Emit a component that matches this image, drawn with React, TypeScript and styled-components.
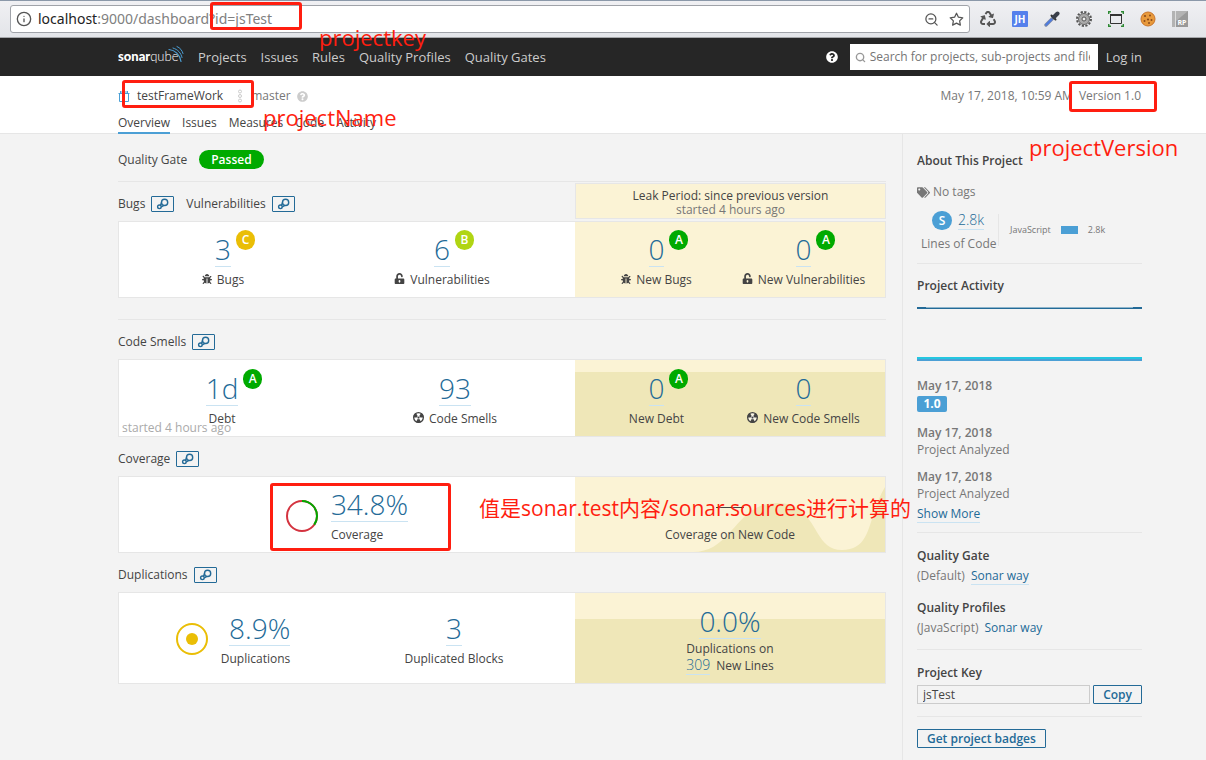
import React from "react";
import styled, { createGlobalStyle } from "styled-components";
import { FaBug, FaUnlockAlt, FaTags, FaQuestionCircle, FaRecycle } from "react-icons/fa";
import { FiSearch, FiStar, FiZoomOut, FiInfo } from "react-icons/fi";

const blue = "#236a97";
const lightBlue = "#4b9fd5";
const line = "#e6e6e6";
const red = "#ff1e10";

const Global = createGlobalStyle`
  * { box-sizing: border-box; }
  html { background: #f3f3f3; }
  body {
    margin: 0;
    background: #f3f3f3;
    color: #444;
    font: 12px/16px "Open Sans", "Noto Sans CJK SC", sans-serif;
  }
  a { color: inherit; text-decoration: none; }
  button, input { font: inherit; }
  h1, h2, h3, p, ul { margin: 0; padding: 0; font: inherit; list-style: none; }
`;

const Page = styled.div`
  position: relative;
  min-height: 100vh;
  overflow: hidden;
  display: flex;
  flex-direction: column;
`;

/* Browser toolbar */
const Toolbar = styled.div`
  display: flex;
  align-items: center;
  height: 38px;
  padding: 0 18px 0 10px;
  border-top: 1px solid #8b98a9;
  border-bottom: 1px solid #a5a7aa;
  background: linear-gradient(#f0f0f3, #e3e5e9);
`;
const AddressBar = styled.div`
  flex: 1;
  display: flex;
  align-items: center;
  gap: 6px;
  height: 28px;
  padding: 0 5px;
  border: 1px solid #a0a3a9;
  border-radius: 3px;
  background: #fff;
  color: #555;
`;
const Address = styled.div`
  flex: 1;
  outline: 0;
  font-family: "Noto Sans", "Open Sans", sans-serif;
  font-size: 14px;
  line-height: 20px;
  color: #808080;
  b { font-weight: 400; color: #222; }
`;
const PlainButton = styled.button`
  display: flex;
  align-items: center;
  justify-content: center;
  min-width: 16px;
  height: 16px;
  padding: 0;
  border: 0;
  background: none;
  color: inherit;
`;
const BarActions = styled.div`
  display: flex;
  gap: 9px;
`;
const Extensions = styled.div`
  display: flex;
  gap: 16px;
  margin-left: 10px;
  color: #555;
`;

/* Site navigation */
const NavBar = styled.header`
  display: flex;
  align-items: center;
  height: 38px;
  padding: 0 64px 0 118px;
  background: #262626;
  color: #ccc;
  font-size: 13px;
`;
const NavLinks = styled.nav`
  flex: 1;
  display: flex;
  gap: 14px;
  margin-left: 14px;
`;
const SearchBox = styled.label`
  display: flex;
  align-items: center;
  gap: 4px;
  width: 248px;
  height: 26px;
  margin: 0 8px 0 10px;
  padding: 0 8px 0 5px;
  background: #fff;
  color: #999;
  font-size: 12px;
  input {
    flex: 1;
    min-width: 0;
    padding: 0;
    border: 0;
    outline: 0;
    background: none;
  }
  input::placeholder { color: #757575; }
`;

/* Project header */
const ProjectHeader = styled.div`
  height: 58px;
  padding: 11px 65px 0 118px;
  border-bottom: 1px solid ${line};
  background: #fff;
`;
const ProjectRow = styled.div`
  display: flex;
  align-items: center;
  height: 18px;
  color: #777;
`;
const ProjectName = styled.h1`
  margin: 0 14px 0 7px;
  color: #444;
`;
const Branch = styled.span`
  display: flex;
  align-items: center;
  gap: 6px;
  margin-left: 8px;
  svg { color: #ccc; }
`;
const Meta = styled.div`
  display: flex;
  gap: 6px;
  margin-left: auto;
`;
const Tabs = styled.nav`
  display: flex;
  gap: 12px;
  margin-top: 9px;
  line-height: 18px;
`;
const Tab = styled.a<{ $active?: boolean }>`
  height: 20px;
  border-bottom: 2px solid ${(p) => (p.$active ? lightBlue : "transparent")};
`;

/* Page columns */
const Columns = styled.div`
  flex: 1;
  display: grid;
  grid-template-columns: minmax(0, 1fr) 240px;
  column-gap: 16px;
  padding: 0 64px 0 118px;
`;
const Side = styled.aside`
  padding-left: 14px;
  border-left: 1px solid ${line};
  color: #777;
`;

const Gate = styled.div`
  display: flex;
  align-items: center;
  gap: 12px;
  height: 48px;
  padding-top: 4px;
  border-bottom: 1px solid ${line};
`;
const Passed = styled.span`
  padding: 0 12px;
  border-radius: 10px;
  background: #0a0;
  color: #fff;
  font-weight: 600;
  line-height: 19px;
`;
const Heading = styled.div`
  display: flex;
  justify-content: space-between;
  height: 39px;
`;
const Titles = styled.div`
  display: flex;
  align-items: center;
  padding-top: 5px;
`;
const Title = styled.h2`
  margin-right: 6px;
`;
const LinkButton = styled.button`
  width: 23px;
  height: 16px;
  margin-right: 12px;
  padding: 0;
  border: 1px solid ${blue};
  border-radius: 1px;
  background: none;
  color: ${blue};
  svg { display: block; }
`;
const LeakBox = styled.div`
  width: 311px;
  height: 36px;
  margin-top: 1px;
  padding-top: 5px;
  border: 1px solid ${line};
  background: #fbf3d5;
  line-height: 14px;
  text-align: center;
  p + p { color: #777; }
`;
const Card = styled.section<{ $height?: number }>`
  position: relative;
  display: grid;
  grid-template-columns: minmax(0, 1fr) 310px;
  height: ${(p) => p.$height || 77}px;
  border: 1px solid ${line};
  background: #fff;
`;
const Divider = styled.hr`
  width: 100%;
  height: 1px;
  margin: 21px 0 0;
  border: 0;
  background: ${line};
`;
const Pane = styled.div<{ $cols: string; $right?: number; $gap?: number }>`
  display: grid;
  grid-template-columns: ${(p) => p.$cols};
  column-gap: ${(p) => p.$gap || 0}px;
  align-items: center;
  padding: 2px ${(p) => p.$right || 0}px 0 0;
`;
const LeakPane = styled.div<{ $single?: boolean; $fill?: number }>`
  position: relative;
  display: grid;
  grid-template-columns: ${(p) => (p.$single ? "1fr" : "1fr 1fr")};
  align-items: center;
  padding: 2px 8px 0;
  background: ${(p) =>
    p.$fill === undefined
      ? "#fbf3d5"
      : `linear-gradient(#fbf3d5 ${p.$fill}px, #efe7b8 ${p.$fill}px)`};
`;
const Wave = styled.svg`
  position: absolute;
  inset: 0;
  width: 100%;
  height: 100%;
`;
const Cell = styled.div`
  position: relative;
  display: flex;
  align-items: center;
  justify-content: center;
  gap: 13px;
`;
const Stack = styled.div<{ $align?: string }>`
  display: flex;
  flex-direction: column;
  align-items: ${(p) => p.$align || "center"};
`;
const Value = styled.a`
  position: relative;
  border-bottom: 1px solid #cae3f2;
  color: ${blue};
  font-size: 28px;
  font-weight: 300;
  line-height: 33px;
`;
const Rating = styled.span<{ $color: string }>`
  position: absolute;
  left: 100%;
  top: -3px;
  width: 19px;
  height: 20px;
  margin-left: 5px;
  border-radius: 10px;
  background: ${(p) => p.$color};
  color: #fff;
  font-size: 12px;
  font-weight: 600;
  line-height: 20px;
  text-align: center;
`;
const Label = styled.span`
  display: flex;
  align-items: center;
  gap: 5px;
  margin-top: 5px;
  white-space: nowrap;
  svg { margin-top: -3px; }
`;
const NoValue = styled.span`
  width: 28px;
  height: 1px;
  margin: 19px 0 14px;
  background: #444;
`;
const TwoLines = styled.div`
  margin-top: 2px;
  a {
    margin-right: 6px;
    border-bottom: 1px solid #cae3f2;
    color: ${blue};
    font-size: 14px;
    font-weight: 300;
  }
`;
const Started = styled.span`
  position: absolute;
  left: 3px;
  bottom: 0;
  color: #aaa;
`;

/* Sidebar parts */
const SideBlock = styled.section<{ $top: number; $bottom: number; $last?: boolean }>`
  padding: ${(p) => p.$top}px 0 ${(p) => p.$bottom}px;
  border-bottom: ${(p) => (p.$last ? "0" : `1px solid ${line}`)};
`;
const SideTitle = styled.h3`
  color: #444;
  font-weight: 600;
`;
const Tags = styled.p`
  display: flex;
  align-items: center;
  gap: 3px;
  margin-top: 15px;
`;
const Size = styled.div`
  display: flex;
  align-items: center;
  margin-top: 11px;
`;
const SizeMain = styled.div`
  width: 81px;
  padding-left: 4px;
  white-space: nowrap;
`;
const SizeValue = styled.div`
  display: flex;
  align-items: center;
  gap: 6px;
  margin-bottom: 6px;
  padding-left: 11px;
  a {
    border-bottom: 1px solid #cae3f2;
    color: ${blue};
    font-size: 14px;
    font-weight: 300;
    line-height: 18px;
  }
`;
const SizeBadge = styled.span`
  width: 20px;
  border-radius: 10px;
  background: ${lightBlue};
  color: #fff;
  font-weight: 600;
  line-height: 19px;
  text-align: center;
`;
const Languages = styled.div`
  display: flex;
  align-items: center;
  gap: 10px;
  height: 32px;
  margin-bottom: 4px;
  padding-left: 11px;
  border-left: 1px solid ${line};
  font-size: 9px;
  i { width: 17px; height: 8px; background: ${lightBlue}; }
`;
const Graph = styled.svg`
  display: block;
  width: 100%;
  height: 54px;
  margin: 13px 0 16px;
`;
const Event = styled.li`
  margin-bottom: 10px;
  line-height: 17px;
  strong { display: block; font-weight: 600; }
  &:last-child { margin-bottom: 4px; }
`;
const VersionTag = styled.span`
  display: block;
  width: 30px;
  margin: 2px 0 12px;
  border-radius: 2px;
  background: ${lightBlue};
  color: #fff;
  font-weight: 700;
  line-height: 16px;
  text-align: center;
`;
const BlueLink = styled.a<{ $plain?: boolean }>`
  border-bottom: ${(p) => (p.$plain ? "0" : "1px solid #cae3f2")};
  color: ${blue};
`;
const Assigned = styled.p<{ $gap?: boolean }>`
  display: flex;
  gap: 6px;
  margin: 4px 0 ${(p) => (p.$gap ? 15 : 0)}px;
`;
const KeyRow = styled.div`
  display: flex;
  gap: 3px;
  margin-top: 4px;
  input {
    flex: 1;
    min-width: 0;
    height: 19px;
    padding: 0 5px;
    border: 1px solid #ccc;
    background: none;
    color: #444;
  }
`;
const Outline = styled.button`
  height: 19px;
  padding: 0 9px;
  border: 1px solid ${blue};
  border-radius: 1px;
  background: none;
  color: ${blue};
  font-weight: 600;
  line-height: 16px;
`;

/* Notes drawn over the page */
const Frame = styled.div<{ $x: number; $y: number; $w: number; $h: number }>`
  position: absolute;
  left: ${(p) => p.$x}px;
  top: ${(p) => p.$y}px;
  width: ${(p) => p.$w}px;
  height: ${(p) => p.$h}px;
  border: 3px solid ${red};
  border-radius: 3px;
  pointer-events: none;
`;
const Note = styled.span<{ $x: number; $y: number; $size?: number }>`
  position: absolute;
  left: ${(p) => p.$x}px;
  top: ${(p) => p.$y}px;
  color: ${red};
  font-size: ${(p) => p.$size || 22}px;
  line-height: 28px;
  white-space: nowrap;
  pointer-events: none;
`;

const Chain = ({ label }: { label: string }) => (
  <LinkButton aria-label={label}>
    <svg width="21" height="14" viewBox="0 0 21 14" fill="none" stroke="currentColor" strokeWidth="1.4">
      <circle cx="12.6" cy="5.4" r="3.1" />
      <circle cx="7.4" cy="9.8" r="1.8" />
      <path d="M9.500 5.500L8.600 8.200M9.300 10l2.500-1.500" />
    </svg>
  </LinkButton>
);

const SmellIcon = () => (
  <svg width="11" height="11" viewBox="0 0 12 12">
    <circle cx="6" cy="6" r="5.300" fill="#fff" fillOpacity=".6" stroke="#444" strokeWidth="1.400" />
    <path fill="#444" d="M6 6L3.200 1.200A5.600 5.600 0 0 0 .4 6ZM6 6h5.600A5.600 5.600 0 0 0 8.800 1.200ZM6 6L3.200 10.800a5.600 5.600 0 0 0 5.600 0Z" />
    <circle cx="6" cy="6" r="1.400" fill="#444" stroke="#fff" strokeWidth=".7" />
  </svg>
);

const Logo = () => (
  <svg width="66" height="22" viewBox="0 0 66 22" role="img" aria-label="sonarqube">
    <text x="0" y="16" fill="#fff" fontFamily="Lato, sans-serif" fontSize="13">
      <tspan fontWeight="900">sonar</tspan>
      <tspan fontWeight="300">qube</tspan>
    </text>
    <g fill="none" stroke={lightBlue} strokeLinecap="round">
      <path d="M51 4.500c6 .5 11 5 12 12" strokeWidth="1.200" />
      <path d="M55 3c5 1.500 8 5 9 9.500" />
      <path d="M59 1.500c3.500 1.500 5 4 6 7" />
    </g>
  </svg>
);

const A = <Rating $color="#0a0">A</Rating>;

export default function App() {
  return (
    <>
      <Global />
      <Page>
        <Toolbar>
          <AddressBar>
            <FiInfo size={16} />
            <Address role="textbox" aria-label="Address" contentEditable suppressContentEditableWarning spellCheck={false}>
              <b>localhost</b>:9000/dashboard?id=jsTest
            </Address>
            <BarActions>
              <PlainButton aria-label="Zoom out"><FiZoomOut size={15} /></PlainButton>
              <PlainButton aria-label="Bookmark"><FiStar size={15} /></PlainButton>
            </BarActions>
          </AddressBar>
          <Extensions>
            <PlainButton aria-label="Recycle"><FaRecycle size={16} /></PlainButton>
            <PlainButton aria-label="JH">
              <svg width="16" height="16" viewBox="0 0 16 16">
                <rect width="16" height="16" rx="1" fill="#5580ec" />
                <text x="8" y="12" fill="#fff" fontFamily="Open Sans, sans-serif" fontSize="10" fontWeight="700" textAnchor="middle">JH</text>
              </svg>
            </PlainButton>
            <PlainButton aria-label="Color picker">
              <svg width="16" height="16" viewBox="0 0 16 16" strokeLinecap="round">
                <path d="M2 14L9 7" stroke="#7d8aa5" strokeWidth="3.400" />
                <path d="M2.200 13.800L7.500 8.500" stroke="#4d7be0" strokeWidth="2" />
                <path d="M7.500 4.500l4 4" stroke="#333" strokeWidth="2" />
                <path d="M10 6l3.500-3.500" stroke="#3a3f4a" strokeWidth="4" />
              </svg>
            </PlainButton>
            <PlainButton aria-label="Settings">
              <svg width="16" height="16" viewBox="0 0 16 16" fill="none">
                <circle cx="8" cy="8" r="7" stroke="#555" strokeWidth="2" strokeDasharray="2.200 1.470" />
                <circle cx="8" cy="8" r="5.500" fill="#aaa" stroke="#666" />
                <circle cx="8" cy="8" r="2" fill="#eee" stroke="#555" />
              </svg>
            </PlainButton>
            <PlainButton aria-label="Resize window">
              <svg width="16" height="16" viewBox="0 0 16 16" fill="none">
                <path d="M.7 3V.7H3M13 .7h2.300V3M15.300 13v2.300H13M3 15.300H.7V13" stroke="#2f8a35" strokeWidth="1.400" />
                <path d="M2.500 3.500h11v9h-11z" stroke="#333" />
                <path d="M2 4h12" stroke="#333" strokeWidth="2" />
              </svg>
            </PlainButton>
            <PlainButton aria-label="Cookies">
              <svg width="16" height="16" viewBox="0 0 16 16">
                <circle cx="8" cy="8" r="7" fill="#e89a3c" stroke="#c9742a" />
                <g fill="#8a4a1c">
                  <circle cx="5" cy="5" r="1.100" /><circle cx="10" cy="4.500" r="1" /><circle cx="8" cy="8.500" r="1.100" />
                  <circle cx="4.500" cy="10" r="1" /><circle cx="11.500" cy="9" r="1" /><circle cx="9" cy="12" r="1" />
                </g>
              </svg>
            </PlainButton>
            <PlainButton aria-label="RP">
              <svg width="16" height="16" viewBox="0 0 16 16">
                <rect width="16" height="16" fill="#b3b3b3" />
                <path d="M3 0h1v16H3z" fill="#ddd" />
                <path d="M4 10L16 0v16H4z" fill="#999" />
                <text x="10" y="14" fill="#fff" fontFamily="Open Sans, sans-serif" fontSize="7" fontWeight="700" textAnchor="middle">RP</text>
              </svg>
            </PlainButton>
          </Extensions>
        </Toolbar>

        <NavBar>
          <a href="#home"><Logo /></a>
          <NavLinks>
            <a href="#projects">Projects</a>
            <a href="#issues">Issues</a>
            <a href="#rules">Rules</a>
            <a href="#profiles">Quality Profiles</a>
            <a href="#gates">Quality Gates</a>
          </NavLinks>
          <PlainButton aria-label="Help"><FaQuestionCircle size={12} color="#fff" /></PlainButton>
          <SearchBox>
            <FiSearch size={11} strokeWidth={3} />
            <input type="text" aria-label="Search" placeholder="Search for projects, sub-projects and files..." />
          </SearchBox>
          <a href="#login">Log in</a>
        </NavBar>

        <ProjectHeader>
          <ProjectRow>
            <svg width="12" height="12" viewBox="0 0 12 12" fill="none" stroke={lightBlue}>
              <path d="M.5 3.500h11M1.500 3.500v8h9v-8M2.500 1v2.500M9.500 1v2.500M4 1v2M8 1v2" />
            </svg>
            <ProjectName>testFrameWork</ProjectName>
            <svg width="6" height="14" viewBox="0 0 6 14" fill="none" stroke="#ccc">
              <circle cx="3" cy="2.500" r="1.500" /><circle cx="3" cy="7" r="1.500" /><circle cx="3" cy="11.500" r="1.500" />
            </svg>
            <Branch>master <FaQuestionCircle size={11} /></Branch>
            <Meta><span>May 17, 2018, 10:59 AM</span><span>Version 1.0</span></Meta>
          </ProjectRow>
          <Tabs>
            <Tab href="#overview" $active>Overview</Tab>
            <Tab href="#project-issues">Issues</Tab>
            <Tab href="#measures">Measures</Tab>
            <Tab href="#code">Code</Tab>
            <Tab href="#activity">Activity</Tab>
          </Tabs>
        </ProjectHeader>

        <Columns>
          <main>
            <Gate>Quality Gate <Passed>Passed</Passed></Gate>

            <Heading>
              <Titles>
                <Title>Bugs</Title><Chain label="Bugs history" />
                <Title>Vulnerabilities</Title><Chain label="Vulnerabilities history" />
              </Titles>
              <LeakBox><p>Leak Period: since previous version</p><p>started 4 hours ago</p></LeakBox>
            </Heading>
            <Card>
              <Pane $cols="208fr 230fr" $right={18}>
                <Stack>
                  <Value href="#bugs">3<Rating $color="#eabe06">C</Rating></Value>
                  <Label><FaBug size={10} />Bugs</Label>
                </Stack>
                <Stack>
                  <Value href="#vulnerabilities">6<Rating $color="#b0d513">B</Rating></Value>
                  <Label><FaUnlockAlt size={11} />Vulnerabilities</Label>
                </Stack>
              </Pane>
              <LeakPane>
                <Stack>
                  <Value href="#new-bugs">0{A}</Value>
                  <Label><FaBug size={10} />New Bugs</Label>
                </Stack>
                <Stack>
                  <Value href="#new-vulnerabilities">0{A}</Value>
                  <Label><FaUnlockAlt size={11} />New Vulnerabilities</Label>
                </Stack>
              </LeakPane>
            </Card>

            <Divider />
            <Heading>
              <Titles><Title>Code Smells</Title><Chain label="Code Smells history" /></Titles>
            </Heading>
            <Card $height={78}>
              <Pane $cols="206fr 240fr" $gap={10}>
                <Stack>
                  <Value href="#debt">1d{A}</Value>
                  <Label>Debt</Label>
                </Stack>
                <Stack>
                  <Value href="#smells">93</Value>
                  <Label><SmellIcon />Code Smells</Label>
                </Stack>
              </Pane>
              <LeakPane $fill={12}>
                <Stack>
                  <Value href="#new-debt">0{A}</Value>
                  <Label>New Debt</Label>
                </Stack>
                <Stack>
                  <Value href="#new-smells">0</Value>
                  <Label><SmellIcon />New Code Smells</Label>
                </Stack>
              </LeakPane>
              <Started>started 4 hours ago</Started>
            </Card>

            <Heading>
              <Titles><Title>Coverage</Title><Chain label="Coverage history" /></Titles>
            </Heading>
            <Card>
              <Pane $cols="1fr">
                <Cell>
                  <svg width="32" height="32" viewBox="0 0 32 32" fill="none" strokeWidth="2">
                    <circle cx="16" cy="16" r="15" stroke="#d4333f" />
                    <circle cx="16" cy="16" r="15" stroke="#0a0" pathLength="100" strokeDasharray="34.8 65.2" transform="rotate(-90 16 16)" />
                  </svg>
                  <Stack $align="flex-start">
                    <Value href="#coverage">34.8%</Value>
                    <Label>Coverage</Label>
                  </Stack>
                </Cell>
              </Pane>
              <LeakPane $single>
                <Wave viewBox="0 0 310 75" preserveAspectRatio="none">
                  <path d="M118 75C158 75 160 26 202 26S236 73 267 73S292 40 310 10V75Z" fill="#efe7b8" />
                </Wave>
                <Cell>
                  <Stack><NoValue /><Label>Coverage on New Code</Label></Stack>
                </Cell>
              </LeakPane>
            </Card>

            <Heading>
              <Titles><Title>Duplications</Title><Chain label="Duplications history" /></Titles>
            </Heading>
            <Card $height={92}>
              <Pane $cols="228fr 214fr" $right={14}>
                <Cell>
                  <svg width="32" height="32" viewBox="0 0 32 32">
                    <circle cx="16" cy="16" r="15" fill="none" stroke="#eabe06" strokeWidth="2" />
                    <circle cx="16" cy="16" r="6" fill="#eabe06" />
                  </svg>
                  <Stack $align="flex-end">
                    <Value href="#duplications">8.9%</Value>
                    <Label>Duplications</Label>
                  </Stack>
                </Cell>
                <Stack>
                  <Value href="#blocks">3</Value>
                  <Label>Duplicated Blocks</Label>
                </Stack>
              </Pane>
              <LeakPane $single $fill={26}>
                <Stack>
                  <Value href="#new-duplications">0.0%</Value>
                  <TwoLines>Duplications on<br /><a href="#new-lines">309</a>New Lines</TwoLines>
                </Stack>
              </LeakPane>
            </Card>
          </main>

          <Side>
            <SideBlock $top={19} $bottom={11}>
              <SideTitle>About This Project</SideTitle>
              <Tags><FaTags size={13} />No tags</Tags>
              <Size>
                <SizeMain>
                  <SizeValue><SizeBadge>S</SizeBadge><a href="#lines">2.8k</a></SizeValue>
                  Lines of Code
                </SizeMain>
                <Languages><span>JavaScript</span><i /><span>2.8k</span></Languages>
              </Size>
            </SideBlock>
            <SideBlock $top={14} $bottom={10}>
              <SideTitle>Project Activity</SideTitle>
              <Graph viewBox="0 0 224 54" preserveAspectRatio="none">
                <path d="M0 0h224v2H0z" fill={blue} />
                <path d="M9 0h206v1H9z" fill="#8fb5cb" />
                <path d="M0 50h224v4H0z" fill={lightBlue} />
                <path d="M0 50h224v2H0z" fill="#24c6e0" />
              </Graph>
              <ul>
                <Event><strong>May 17, 2018</strong><VersionTag>1.0</VersionTag></Event>
                <Event><strong>May 17, 2018</strong>Project Analyzed</Event>
                <Event><strong>May 17, 2018</strong>Project Analyzed</Event>
              </ul>
              <BlueLink href="#more">Show More</BlueLink>
            </SideBlock>
            <SideBlock $top={15} $bottom={13}>
              <SideTitle>Quality Gate</SideTitle>
              <Assigned $gap>(Default) <BlueLink href="#gate">Sonar way</BlueLink></Assigned>
              <SideTitle>Quality Profiles</SideTitle>
              <Assigned>(JavaScript) <BlueLink href="#profile" $plain>Sonar way</BlueLink></Assigned>
            </SideBlock>
            <SideBlock $top={15} $bottom={12}>
              <SideTitle as="label" htmlFor="project-key">Project Key</SideTitle>
              <KeyRow>
                <input id="project-key" type="text" defaultValue="jsTest" readOnly />
                <Outline>Copy</Outline>
              </KeyRow>
            </SideBlock>
            <SideBlock $top={12} $bottom={10} $last>
              <Outline>Get project badges</Outline>
            </SideBlock>
          </Side>
        </Columns>

        <Frame $x={210} $y={2} $w={92} $h={28} />
        <Frame $x={122} $y={80} $w={132} $h={28} />
        <Frame $x={1069} $y={81} $w={88} $h={31} />
        <Frame $x={270} $y={483} $w={181} $h={68} />
        <Note $x={319} $y={23}>projectkey</Note>
        <Note $x={263} $y={103}>projectName</Note>
        <Note $x={1029} $y={133}>projectVersion</Note>
        <Note $x={479} $y={494} $size={21}>值是sonar.test内容/sonar.sources进行计算的</Note>
      </Page>
    </>
  );
}
